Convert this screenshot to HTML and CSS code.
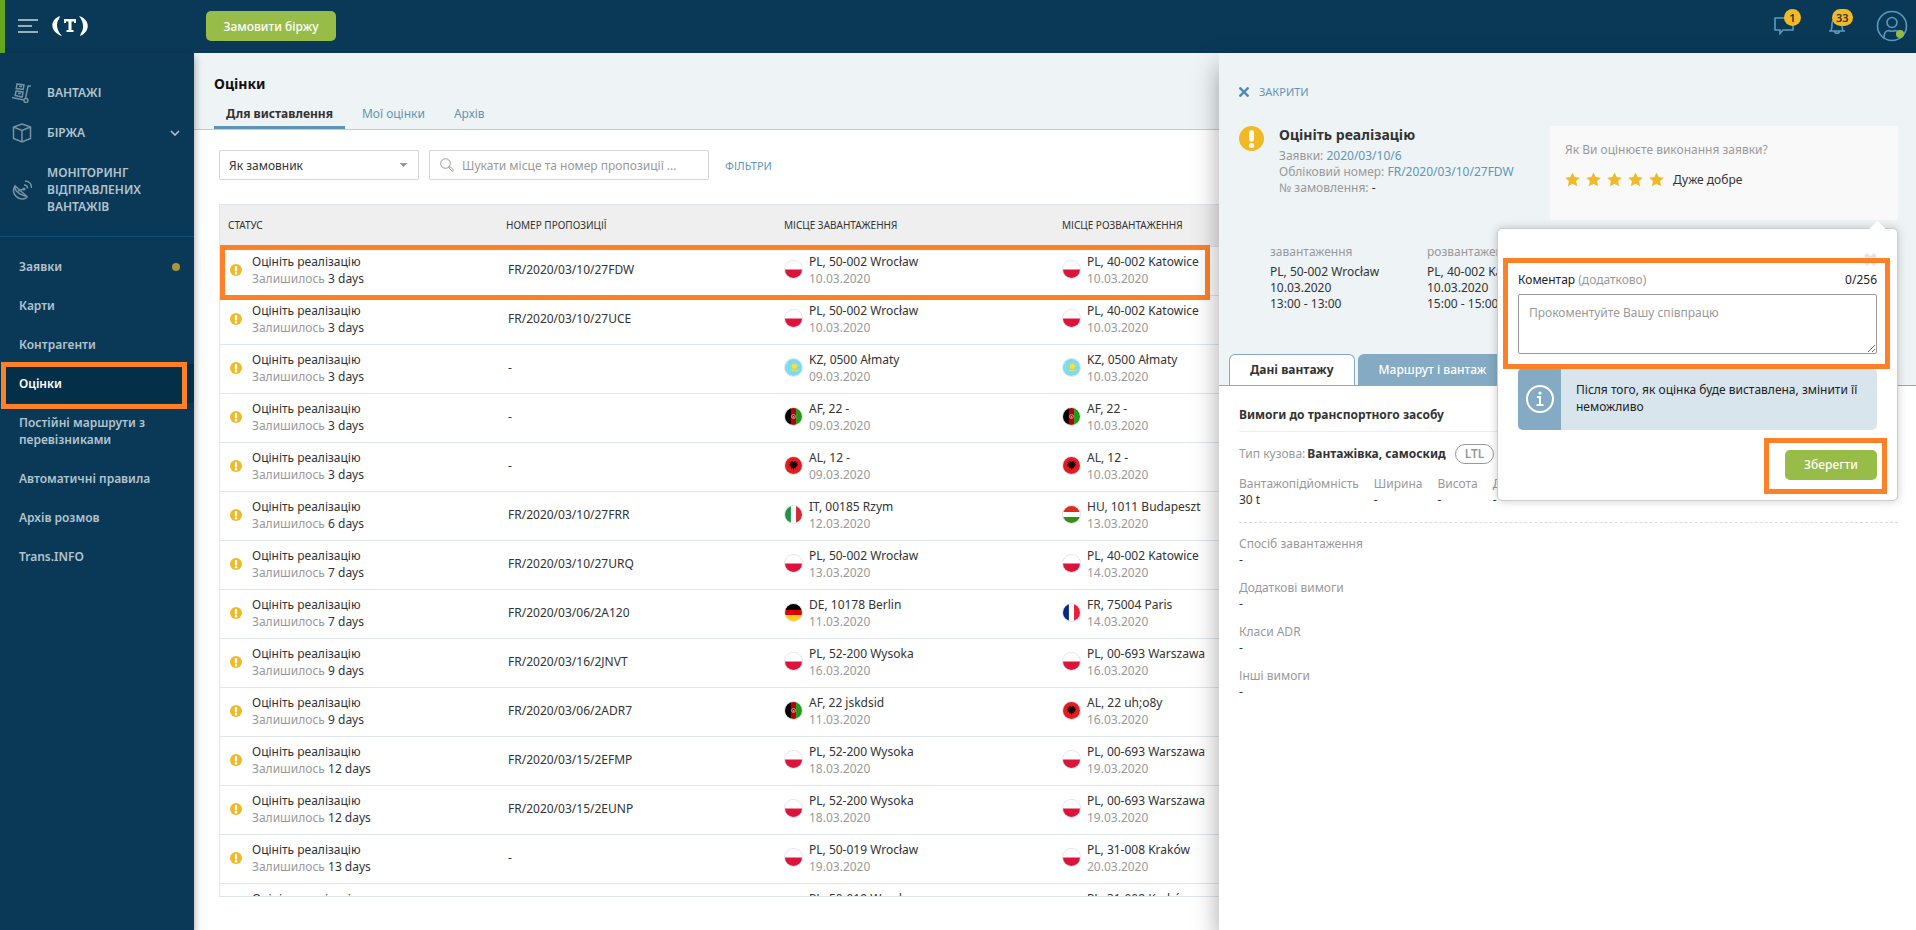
FILE: index.html
```html
<!DOCTYPE html>
<html lang="uk">
<head>
<meta charset="utf-8">
<meta name="viewport" content="width=device-width, initial-scale=1">
<title>Оцінки</title>
<link rel="stylesheet" href="styles.css">
</head>
<body>
  <!-- Shared icons and flags -->
  <svg class="sprite" aria-hidden="true">
    <symbol id="i-warn" viewBox="0 0 24 24">
      <circle cx="12" cy="12" r="12" fill="#efba26"/>
      <rect x="9.7" y="4" width="4.6" height="11" rx="2" fill="#fff"/>
      <circle cx="12" cy="18.6" r="2.4" fill="#fff"/>
    </symbol>
    <symbol id="i-star" viewBox="0 0 16 16">
      <path d="M8 .5l2.300 4.900 5.500.6-4 3.700 1.100 5.500L8 12.500l-4.900 2.700 1.100-5.500-4-3.700 5.500-.6z" fill="#efba26"/>
    </symbol>
    <symbol id="f-PL" viewBox="0 0 20 20">
      <path d="M0 0h20v10H0z" fill="#fff"/><path d="M0 10h20v10H0z" fill="#dc143c"/>
    </symbol>
    <symbol id="f-KZ" viewBox="0 0 20 20">
      <path d="M0 0h20v20H0z" fill="#77daf7"/>
      <circle cx="11" cy="8.500" r="3" fill="#ffe12b"/>
      <circle cx="11" cy="8.500" r="4.200" fill="none" stroke="#ffe12b" stroke-width="1" stroke-dasharray="1 1"/>
      <path d="M4.500 11.500c2 4 11 4 13 0-3 2.500-10 2.500-13 0z" fill="#ffe12b"/>
      <path d="M3 4v11" stroke="#ffe12b" stroke-width="1" stroke-dasharray="2 1"/>
    </symbol>
    <symbol id="f-AF" viewBox="0 0 20 20">
      <path d="M0 0h7v20H0z" fill="#000"/><path d="M7 0h6v20H7z" fill="#b80000"/><path d="M13 0h7v20h-7z" fill="#219a1c"/>
      <circle cx="10" cy="10" r="2.400" fill="none" stroke="#e89a9a" stroke-width="1"/><circle cx="10" cy="10.500" r="1" fill="#e89a9a"/>
    </symbol>
    <symbol id="f-AL" viewBox="0 0 20 20">
      <path d="M0 0h20v20H0z" fill="#e41b20"/>
      <path d="M10 6L8.500 4.500 6.500 5.500 8 7 5 6l1 2-1.500.5 1.500 1-1 1.500 2.500.5-.5 2 2-.5L10 16l1-3 2 .5-.5-2 2.500-.5-1-1.500 1.500-1L14 8l1-2-3 1 1.500-1.500-2-1z" fill="#1b0405"/>
    </symbol>
    <symbol id="f-IT" viewBox="0 0 20 20">
      <path d="M0 0h7v20H0z" fill="#1f9346"/><path d="M7 0h6v20H7z" fill="#fff"/><path d="M13 0h7v20h-7z" fill="#cf2b37"/>
    </symbol>
    <symbol id="f-HU" viewBox="0 0 20 20">
      <path d="M0 0h20v7H0z" fill="#d9301c"/><path d="M0 7h20v6H0z" fill="#fff"/><path d="M0 13h20v7H0z" fill="#388d1a"/>
    </symbol>
    <symbol id="f-DE" viewBox="0 0 20 20">
      <path d="M0 0h20v7H0z" fill="#000"/><path d="M0 7h20v6H0z" fill="#dd0000"/><path d="M0 13h20v7H0z" fill="#ffcc1c"/>
    </symbol>
    <symbol id="f-FR" viewBox="0 0 20 20">
      <path d="M0 0h7v20H0z" fill="#042b84"/><path d="M7 0h6v20H7z" fill="#fff"/><path d="M13 0h7v20h-7z" fill="#f01c35"/>
    </symbol>
  </svg>

  <header class="topbar">
    <button class="icon-btn" type="button" aria-label="Меню">
      <svg width="20" height="16" viewBox="0 0 20 16" stroke="#96aebc" stroke-width="2"><path d="M0 2h20M0 8h14M0 14h20"/></svg>
    </button>
    <a class="logo" href="#" aria-label="Trans">
      <svg width="36" height="22" viewBox="0 0 36 22" fill="none">
        <path d="M8 1C-3 5-2 17 10 21 4 15 4 8 7 4zM27 1c12 4 11 16 1 20l1-3c3-4 3-11-2-17z" fill="#fff"/>
        <path d="M12 4h12v4h-2V6.500h-2.500V15h2v2h-7v-2h2V6.500H14V8h-2z" fill="#fff"/>
      </svg>
    </a>
    <button class="btn order" type="button">Замовити біржу</button>
    <div class="tools">
      <button class="icon-btn tool" type="button" aria-label="Повідомлення">
        <svg width="20" height="18" viewBox="0 0 20 18" fill="none" stroke="#5b9abd" stroke-width="1.600"><path d="M1 1h18v12H9l-3 3.500V13H1z"/></svg>
        <span class="badge">1</span>
      </button>
      <button class="icon-btn tool" type="button" aria-label="Сповіщення">
        <svg width="18" height="18" viewBox="0 0 18 18" fill="none" stroke="#5b9abd" stroke-width="1.600"><path d="M1 14h16M3 14c1-2 1-5 1-7 0-7 10-7 10 0 0 2 0 5 1 7M6.500 14c.5 3 4.500 3 5 0"/></svg>
        <span class="badge">33</span>
      </button>
      <button class="icon-btn tool avatar" type="button" aria-label="Профіль">
        <svg width="32" height="32" viewBox="0 0 32 32" fill="none" stroke="#5b9abd" stroke-width="1.600">
          <circle cx="16" cy="16" r="14.500"/><circle cx="16" cy="12.500" r="5"/><path d="M8 28c0-5 1-7 5-7.500 2 1 4 1 6 0 4 .5 5 2.500 5 7.500"/>
          <circle cx="24" cy="24" r="4" fill="#98bc43" stroke="none"/>
        </svg>
      </button>
    </div>
  </header>

  <div class="layout">
    <nav class="sidebar">
      <ul class="nav-main">
        <li><a href="#">
          <svg width="20" height="20" viewBox="0 0 20 20" fill="none" stroke="#7693a4" stroke-width="1.500"><path d="M0 14.500l12 2.500M13.500 15.500L16 3h3M5 1l7 1-.8 4.500-7-1zM4 8l7 1-.8 5-7-1.500zM7 3.500h3M6 10.500h3"/><circle cx="14" cy="17.500" r="2"/></svg>
          <span>ВАНТАЖІ</span></a></li>
        <li><a href="#">
          <svg width="20" height="20" viewBox="0 0 20 20" fill="none" stroke="#7693a4" stroke-width="1.500"><path d="M10 1l8.500 3v11.500L10 19l-8.500-3.500V4zM1.500 4L10 7.500 18.500 4M10 7.500V19"/></svg>
          <span>БІРЖА</span>
          <svg class="chevron" width="10" height="6" viewBox="0 0 10 6" fill="none" stroke="#b3c3cd" stroke-width="1.600"><path d="M1 1l4 4 4-4"/></svg></a></li>
        <li><a href="#">
          <svg width="20" height="20" viewBox="0 0 20 20" fill="none" stroke="#7693a4" stroke-width="1.500"><path d="M3 6c-4 6 1 13 8 13 2-.3 4-1.500 4-2.500zM3 6c-1 3 2 8 12 10.500M6 11l6-2"/><path d="M12 5c2 0 3.500 1.500 3.500 3.500M13 1c4 0 6.500 3 6.500 7"/><circle cx="12" cy="9" r="1.500" fill="#7693a4" stroke="none"/></svg>
          <span>МОНІТОРИНГ ВІДПРАВЛЕНИХ ВАНТАЖІВ</span></a></li>
      </ul>
      <ul class="nav-sub">
        <li><a href="#">Заявки <i class="dot"></i></a></li>
        <li><a href="#">Карти</a></li>
        <li><a href="#">Контрагенти</a></li>
        <li><a class="current" href="#">Оцінки<span class="mark mark-nav"></span></a></li>
        <li><a href="#">Постійні маршрути з перевізниками</a></li>
        <li><a href="#">Автоматичні правила</a></li>
        <li><a href="#">Архів розмов</a></li>
        <li><a href="#">Trans.INFO</a></li>
      </ul>
    </nav>

    <main class="content">
      <div class="page-head">
        <h1>Оцінки</h1>
        <div class="tabs">
          <a class="active" href="#">Для виставлення</a>
          <a href="#">Мої оцінки</a>
          <a href="#">Архів</a>
        </div>
      </div>
      <form class="filters">
        <select aria-label="Роль">
          <option>Як замовник</option>
        </select>
        <div class="search">
          <svg width="14" height="14" viewBox="0 0 14 14" fill="none" stroke="#999"><circle cx="5.500" cy="5.500" r="4.800"/><path d="M9 9l1-.5 3.500 3.500-1 1.500L9 10z"/></svg>
          <input type="text" aria-label="Пошук" placeholder="Шукати місце та номер пропозиції ...">
        </div>
        <a href="#">ФІЛЬТРИ</a>
      </form>
      <div class="table-area">
        <div class="table-wrap">
          <table>
            <thead>
              <tr>
                <th>СТАТУС</th>
                <th>НОМЕР ПРОПОЗИЦІЇ</th>
                <th>МІСЦЕ ЗАВАНТАЖЕННЯ</th>
                <th>МІСЦЕ РОЗВАНТАЖЕННЯ</th>
              </tr>
            </thead>
            <tbody id="rows"></tbody>
          </table>
        </div>
        <span class="mark mark-row"></span>
      </div>
    </main>

    <aside class="panel">
      <div class="panel-head">
        <button class="close" type="button">
          <svg width="10" height="10" viewBox="0 0 10 10" stroke="#4d8cb0" stroke-width="2.400"><path d="M.5.5l9 9M9.500.5l-9 9"/></svg>
          ЗАКРИТИ
        </button>
        <div class="summary">
          <svg class="warn" width="25" height="25"><use href="#i-warn"/></svg>
          <div class="summary-text">
            <h2>Оцініть реалізацію</h2>
            <p>Заявки: <a href="#">2020/03/10/6</a></p>
            <p>Обліковий номер: <a href="#">FR/2020/03/10/27FDW</a></p>
            <p>№ замовлення: <span>-</span></p>
          </div>
          <div class="rate">
            <p>Як Ви оцінюєте виконання заявки?</p>
            <div class="stars">
              <svg width="15" height="15"><use href="#i-star"/></svg>
              <svg width="15" height="15"><use href="#i-star"/></svg>
              <svg width="15" height="15"><use href="#i-star"/></svg>
              <svg width="15" height="15"><use href="#i-star"/></svg>
              <svg width="15" height="15"><use href="#i-star"/></svg>
              <span>Дуже добре</span>
            </div>

            <form class="popover">
              <button class="pop-close" type="button" aria-label="Закрити">
                <svg width="13" height="13" viewBox="0 0 13 13" stroke="#dfe7ee" stroke-width="4.500"><path d="M1.500 1.500l10 10M11.500 1.500l-10 10"/></svg>
              </button>
              <div class="field">
                <div class="field-head">
                  <label for="comment">Коментар <span>(додатково)</span></label>
                  <span>0/256</span>
                </div>
                <textarea id="comment" placeholder="Прокоментуйте Вашу співпрацю"></textarea>
                <span class="mark mark-field"></span>
              </div>
              <div class="info">
                <div class="info-icon">
                  <svg width="28" height="28" viewBox="0 0 28 28" fill="none" stroke="#fff" stroke-width="2"><circle cx="14" cy="14" r="13"/><path d="M11 12h3v8M10.500 20h7"/><circle cx="14" cy="8" r="1.600" fill="#fff" stroke="none"/></svg>
                </div>
                <p>Після того, як оцінка буде виставлена, змінити її неможливо</p>
              </div>
              <div class="save">
                <button class="btn" type="submit">Зберегти</button>
                <span class="mark mark-save"></span>
              </div>
            </form>
          </div>
        </div>
        <div class="route">
          <div>
            <h3>завантаження</h3>
            <p>PL, 50-002 Wrocław<br>10.03.2020<br>13:00 - 13:00</p>
          </div>
          <div>
            <h3>розвантаження</h3>
            <p>PL, 40-002 Katowice<br>10.03.2020<br>15:00 - 15:00</p>
          </div>
        </div>
        <div class="panel-tabs">
          <button class="active" type="button">Дані вантажу</button>
          <button type="button">Маршрут і вантаж</button>
        </div>
      </div>
      <div class="panel-body">
        <h4>Вимоги до транспортного засобу</h4>
        <div class="body-type"><span>Тип кузова:</span><b>Вантажівка, самоскид</b><i class="pill">LTL</i></div>
        <dl class="params">
          <div><dt>Вантажопідйомність</dt><dd>30 t</dd></div>
          <div><dt>Ширина</dt><dd>-</dd></div>
          <div><dt>Висота</dt><dd>-</dd></div>
          <div><dt>Довжина</dt><dd>-</dd></div>
        </dl>
        <dl class="extra">
          <div><dt>Спосіб завантаження</dt><dd>-</dd></div>
          <div><dt>Додаткові вимоги</dt><dd>-</dd></div>
          <div><dt>Класи ADR</dt><dd>-</dd></div>
          <div><dt>Інші вимоги</dt><dd>-</dd></div>
        </dl>
      </div>
    </aside>
  </div>
  <script src="script.js"></script>
</body>
</html>
```

FILE: styles.css
```css
* {
  box-sizing: border-box;
}
body {
  margin: 0;
  height: 100vh;
  display: flex;
  flex-direction: column;
  overflow: hidden;
  background: #fff;
  color: #333;
  font-family: "Noto Sans", sans-serif;
  font-size: 12px;
  line-height: 17px;
}
h1, h2, h3, h4, p, ul, dl, dd {
  margin: 0;
  padding: 0;
}
ul {
  list-style: none;
}
a {
  color: #5f96b5;
  text-decoration: none;
}
button, input, select, textarea {
  font: inherit;
  color: inherit;
}
button {
  border: none;
  background: none;
  padding: 0;
  cursor: pointer;
}
svg {
  display: block;
  flex: none;
}
.sprite {
  position: absolute;
  width: 0;
  height: 0;
}
.btn {
  height: 30px;
  border-radius: 5px;
  background: #98bc48;
  color: #fff;
  font-weight: 500;
  white-space: nowrap;
}

/* Orange frames around the highlighted areas */
.mark {
  position: absolute;
  border: 5px solid #ff8127;
  pointer-events: none;
}

/* Top bar */
.topbar {
  flex: none;
  height: 53px;
  display: flex;
  align-items: center;
  padding: 0 8px 1px 13px;
  border-left: 5px solid #64a820;
  background: #0a3957;
}
.logo {
  margin-left: 14px;
}
.order {
  width: 130px;
  margin-left: 118px;
}
.tools {
  margin-left: auto;
  display: flex;
  align-items: center;
  gap: 34px;
}
.tool {
  position: relative;
}
.tool.avatar {
  margin-left: -4px;
}
.badge {
  position: absolute;
  top: -8px;
  left: 10px;
  min-width: 17px;
  padding: 0 4px;
  border-radius: 9px;
  background: #efba26;
  color: #333;
  font-size: 11px;
  font-weight: 600;
}
.tool + .tool .badge {
  left: 4px;
}

/* Left menu */
.layout {
  flex: 1;
  min-height: 0;
  display: flex;
}
.sidebar {
  position: relative;
  z-index: 1;
  flex: none;
  width: 194px;
  background: #0a3957;
  box-shadow: 0 4px 8px rgba(0, 0, 0, 0.4);
  font-weight: 600;
}
.sidebar a {
  display: flex;
  align-items: center;
  color: #b3c3cd;
}
.nav-main {
  padding: 19px 0 10px;
  border-bottom: 1px solid #0d4f7c;
}
.nav-main a {
  gap: 15px;
  padding: 12px 14px 11px 12px;
}
.nav-main svg {
  margin: -2px 0;
}
.nav-main span {
  max-width: 110px;
}
.nav-main .chevron {
  margin-left: auto;
}
.nav-sub {
  padding-top: 10px;
}
.nav-sub a {
  position: relative;
  justify-content: space-between;
  padding: 11px 14px 11px 19px;
}
.nav-sub a.current {
  background: #042f49;
  color: #fff;
}
.dot {
  width: 8px;
  height: 8px;
  border-radius: 50%;
  background: #a99538;
}
.mark-nav {
  inset: -2px 7px -6px 1px;
}

/* Ratings list */
.content {
  flex: 1;
  min-width: 0;
  display: flex;
  flex-direction: column;
}
.page-head {
  padding: 22px 20px 0;
  background: #eef3f6;
  border-bottom: 1px solid #c3cbd0;
}
h1 {
  color: #111;
  font-size: 14px;
  line-height: 18px;
}
.tabs {
  display: flex;
  gap: 5px;
  margin-top: 9px;
}
.tabs a {
  padding: 3px 12px 4px;
  border-bottom: 3px solid transparent;
}
.tabs a.active {
  border-color: #5f96b5;
  color: #333;
  font-weight: 700;
}
.filters {
  display: flex;
  align-items: center;
  gap: 10px;
  padding: 20px 25px 24px;
}
.filters select {
  width: 200px;
  height: 30px;
  padding: 0 9px;
  border: 1px solid #d3d6d8;
  border-radius: 2px;
  appearance: none;
  background: conic-gradient(from -60deg at 50% 100%, #fff 120deg, #fff 0) #fff;
  background-image: linear-gradient(to bottom left, #999 50%, transparent 50%), linear-gradient(to bottom right, #999 50%, transparent 50%);
  background-size: 4px 4px;
  background-position: right 14px center, right 10px center;
  background-repeat: no-repeat;
}
.search {
  width: 280px;
  height: 30px;
  display: flex;
  align-items: center;
  gap: 8px;
  padding: 0 10px;
  border: 1px solid #d3d6d8;
  border-radius: 2px;
}
.search input {
  flex: 1;
  min-width: 0;
  padding: 0;
  border: none;
  outline: none;
}
.filters a {
  margin-left: 6px;
  font-size: 11px;
}
::placeholder {
  color: #999;
  opacity: 1;
}
.table-area {
  position: relative;
  flex: 1;
  min-height: 0;
  margin: 0 0 33px 25px;
}
.table-wrap {
  height: 100%;
  overflow: hidden;
  border: 1px solid #dfe6ec;
  border-right: none;
}
table {
  width: 100%;
  table-layout: fixed;
  border-collapse: collapse;
}
th, td {
  border-bottom: 1px solid #dfe6ec;
  text-align: left;
  white-space: nowrap;
}
th {
  width: 278px;
  height: 41px;
  padding: 0 8px;
  background: #efefef;
  font-size: 10px;
  font-weight: 400;
}
th:last-child {
  width: auto;
}
td {
  height: 49px;
  padding: 0 10px 2px;
}
.cell {
  display: flex;
  align-items: center;
  gap: 10px;
}
.cell.place {
  gap: 6px;
  margin-left: -2px;
}
.muted {
  color: #999;
}
.flag {
  width: 19px;
  height: 19px;
  border: 1px solid #e2e2e2;
  border-radius: 50%;
}
.mark-row {
  inset: 41px 9px auto 1px;
  height: 55px;
}

/* Details panel */
.panel {
  position: relative;
  z-index: 2;
  flex: none;
  width: 697px;
  background: #fff;
  box-shadow: 0 12px 24px rgba(0, 0, 0, 0.35);
  line-height: 16px;
}
.panel-head {
  padding: 31px 18px 0 20px;
  background: #eef3f6;
}
.close {
  display: flex;
  align-items: center;
  gap: 10px;
  height: 16px;
  font-size: 11px;
  color: #5f96b5;
}
.summary {
  display: flex;
  align-items: flex-start;
  padding-top: 26px;
  color: #999;
}
.summary-text {
  flex: 1;
  margin-left: 15px;
}
.summary-text span {
  color: #333;
}
h2 {
  margin-bottom: 4px;
  color: #333;
  font-size: 14px;
  line-height: 18px;
}
.rate {
  position: relative;
  flex: none;
  width: 348px;
  height: 94px;
  padding: 16px 15px;
  background: #f9f9f9;
}
.stars {
  display: flex;
  align-items: center;
  gap: 6px;
  margin-top: 12px;
}
.stars span {
  margin: 2px 0 0 3px;
  color: #333;
}
.route {
  display: flex;
  height: 134px;
  padding: 24px 0 0 31px;
}
.route div {
  width: 157px;
}
.route h3 {
  margin-bottom: 4px;
  color: #999;
  font-size: 12px;
  font-weight: 400;
}
.panel-tabs {
  display: flex;
  gap: 3px;
  margin: 0 -18px 0 -20px;
  padding-left: 10px;
  border-bottom: 1px solid #84abc3;
}
.panel-tabs button {
  height: 31px;
  padding: 0 20px;
  border: 1px solid #84abc3;
  border-bottom: none;
  border-radius: 6px 6px 0 0;
  background: #84abc3;
  color: #fff;
  font-weight: 500;
}
.panel-tabs .active {
  margin-bottom: -1px;
  background: #fff;
  color: #333;
  font-weight: 700;
}
.panel-body {
  padding: 20px 18px 0 20px;
}
h4 {
  padding-bottom: 8px;
  border-bottom: 1px solid #eee;
  font-size: 12px;
  line-height: 17px;
}
.body-type {
  display: flex;
  align-items: center;
  gap: 2px;
  margin-top: 12px;
  color: #999;
}
.body-type b {
  color: #333;
}
.pill {
  margin-left: 7px;
  padding: 1px 9px;
  border: 1px solid #999;
  border-radius: 10px;
  font-style: normal;
  font-weight: 600;
}
.params {
  display: flex;
  gap: 15px;
  padding: 12px 0 14px;
  border-bottom: 1px dashed #ddd;
}
dt {
  color: #999;
}
.extra {
  display: grid;
  gap: 12px;
  padding-top: 13px;
}

/* Comment popover */
.popover {
  position: absolute;
  top: 102px;
  right: 0;
  width: 401px;
  padding: 24px 20px 20px;
  border: 1px solid #ccc;
  border-radius: 5px;
  background: #fff;
  box-shadow: 0 0 10px rgba(0, 0, 0, 0.2);
  color: #222;
}
.popover::before {
  content: "";
  position: absolute;
  top: -6px;
  right: 14px;
  width: 11px;
  height: 11px;
  background: #fff;
  transform: rotate(45deg);
}
.pop-close {
  display: block;
  margin-left: auto;
}
.field {
  position: relative;
  margin-top: 6px;
}
.field-head {
  display: flex;
  justify-content: space-between;
  padding-bottom: 6px;
}
.field label span {
  color: #999;
}
textarea {
  display: block;
  width: 100%;
  height: 60px;
  padding: 10px;
  border: 1px solid #999;
  border-radius: 2px;
}
.mark-field {
  inset: -14px -13px -15px -15px;
}
.info {
  display: flex;
  margin-top: 14px;
  border-radius: 5px;
  overflow: hidden;
  background: #d9e5ed;
  line-height: 17px;
}
.info-icon {
  flex: none;
  width: 43px;
  display: grid;
  place-items: center;
  background: #84abc3;
}
.info p {
  padding: 13px 15px 15px;
}
.save {
  position: relative;
  width: 92px;
  margin: 20px 0 0 auto;
}
.save .btn {
  width: 100%;
}
.mark-save {
  inset: -12px -10px -14px -21px;
}
```

FILE: script.js
```js
(function() {
  const rows = [
    ['3', 'FR/2020/03/10/27FDW', 'PL, 50-002 Wrocław', '10.03.2020', 'PL, 40-002 Katowice', '10.03.2020'],
    ['3', 'FR/2020/03/10/27UCE', 'PL, 50-002 Wrocław', '10.03.2020', 'PL, 40-002 Katowice', '10.03.2020'],
    ['3', '-', 'KZ, 0500 Ałmaty', '09.03.2020', 'KZ, 0500 Ałmaty', '10.03.2020'],
    ['3', '-', 'AF, 22 -', '09.03.2020', 'AF, 22 -', '10.03.2020'],
    ['3', '-', 'AL, 12 -', '09.03.2020', 'AL, 12 -', '10.03.2020'],
    ['6', 'FR/2020/03/10/27FRR', 'IT, 00185 Rzym', '12.03.2020', 'HU, 1011 Budapeszt', '13.03.2020'],
    ['7', 'FR/2020/03/10/27URQ', 'PL, 50-002 Wrocław', '13.03.2020', 'PL, 40-002 Katowice', '14.03.2020'],
    ['7', 'FR/2020/03/06/2A120', 'DE, 10178 Berlin', '11.03.2020', 'FR, 75004 Paris', '14.03.2020'],
    ['9', 'FR/2020/03/16/2JNVT', 'PL, 52-200 Wysoka', '16.03.2020', 'PL, 00-693 Warszawa', '16.03.2020'],
    ['9', 'FR/2020/03/06/2ADR7', 'AF, 22 jskdsid', '11.03.2020', 'AL, 22 uh;o8y', '16.03.2020'],
    ['12', 'FR/2020/03/15/2EFMP', 'PL, 52-200 Wysoka', '18.03.2020', 'PL, 00-693 Warszawa', '19.03.2020'],
    ['12', 'FR/2020/03/15/2EUNP', 'PL, 52-200 Wysoka', '18.03.2020', 'PL, 00-693 Warszawa', '19.03.2020'],
    ['13', '-', 'PL, 50-019 Wrocław', '19.03.2020', 'PL, 31-008 Kraków', '20.03.2020'],
    ['13', '-', 'PL, 50-019 Wrocław', '19.03.2020', 'PL, 31-008 Kraków', '20.03.2020']
  ];

  // The flag is picked by the country code at the start of the place
  function place(name, date) {
    return `<td><div class="cell place">
      <svg class="flag"><use href="#f-${name.slice(0, 2)}"/></svg>
      <div>${name}<br><span class="muted">${date}</span></div>
    </div></td>`;
  }

  document.getElementById('rows').innerHTML = rows.map(r => `<tr>
    <td><div class="cell">
      <svg width="12" height="12"><use href="#i-warn"/></svg>
      <div>Оцініть реалізацію<br><span class="muted">Залишилось</span> ${r[0]} days</div>
    </div></td>
    <td>${r[1]}</td>
    ${place(r[2], r[3])}
    ${place(r[4], r[5])}
  </tr>`).join('');
})();
```
